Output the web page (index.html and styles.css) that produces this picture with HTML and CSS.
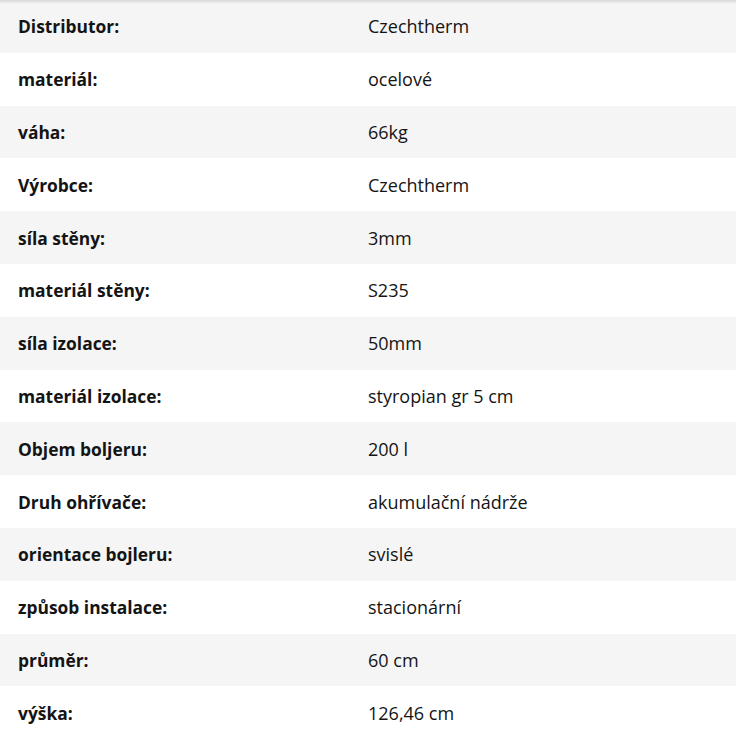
FILE: index.html
```html
<!DOCTYPE html>
<html lang="cs">
<head>
<meta charset="utf-8">
<title>Parametry</title>
<link rel="stylesheet" href="styles.css">
</head>
<body>
<div class="specs">
  <table class="spec-table">
    <colgroup><col class="col-label"><col class="col-value"></colgroup>
    <tbody>
      <tr><th>Distributor:</th><td>Czechtherm</td></tr>
      <tr><th>materiál:</th><td>ocelové</td></tr>
      <tr><th>váha:</th><td>66kg</td></tr>
      <tr><th>Výrobce:</th><td>Czechtherm</td></tr>
      <tr><th>síla stěny:</th><td>3mm</td></tr>
      <tr><th>materiál stěny:</th><td>S235</td></tr>
      <tr><th>síla izolace:</th><td>50mm</td></tr>
      <tr><th>materiál izolace:</th><td>styropian gr 5 cm</td></tr>
      <tr><th>Objem boljeru:</th><td>200 l</td></tr>
      <tr><th>Druh ohřívače:</th><td>akumulační nádrže</td></tr>
      <tr><th>orientace bojleru:</th><td>svislé</td></tr>
      <tr><th>způsob instalace:</th><td>stacionární</td></tr>
      <tr><th>průměr:</th><td>60 cm</td></tr>
      <tr><th>výška:</th><td>126,46 cm</td></tr>
    </tbody>
  </table>
</div>
</body>
</html>
```
FILE: styles.css
```css
html, body {
  margin: 0;
  padding: 0;
  background: #ffffff;
}
body {
  font-family: "Open Sans", Lato, sans-serif;
  font-size: 18px;
  color: #141414;
}
.specs {
  position: relative;
  width: 736px;
}
.specs::before {
  content: "";
  position: absolute;
  left: 0;
  right: 0;
  top: 0;
  height: 4px;
  background: linear-gradient(rgba(0,0,0,0.12), rgba(0,0,0,0));
  pointer-events: none;
}
.spec-table {
  width: 100%;
  border-collapse: collapse;
  table-layout: fixed;
}
.col-label {
  width: 350px;
}
.spec-table tr {
  height: 52.8px;
}
.spec-table tr:nth-child(odd) {
  background: #f5f5f5;
}
.spec-table th,
.spec-table td {
  padding: 0 18px;
  text-align: left;
  vertical-align: middle;
  line-height: 24px;
}
.spec-table th {
  font-weight: 700;
  font-size: 17.4px;
}
.spec-table td {
  font-weight: 400;
  font-size: 18px;
}
```
